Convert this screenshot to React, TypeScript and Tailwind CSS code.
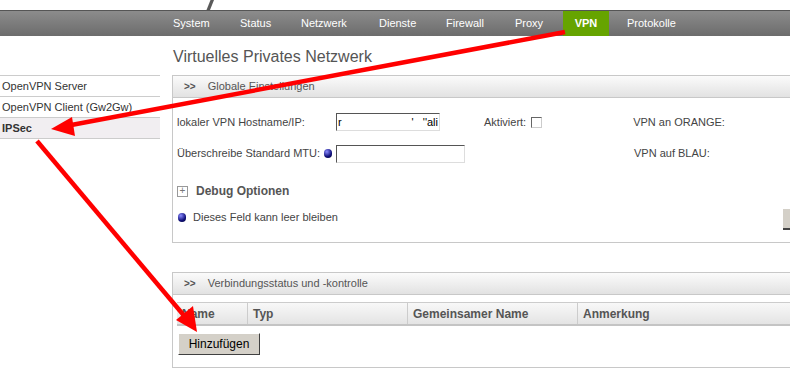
import React from "react";

const nav: { label: string; w: string }[] = [
  { label: "System", w: "w-[67px]" },
  { label: "Status", w: "w-[61px]" },
  { label: "Netzwerk", w: "w-[78px]" },
  { label: "Dienste", w: "w-[67px]" },
  { label: "Firewall", w: "w-[69px]" },
  { label: "Proxy", w: "w-[48px]" },
];

function PanelHeader({ title }: { title: string }) {
  return (
    <div className="h-[23px] flex items-center border border-[#c8c8c8] bg-gradient-to-b from-[#fbfbfb] to-[#e2e2e2] text-[11px] text-[#555]">
      <span className="pl-[11px] pr-[12px] font-bold text-[10px]">&gt;&gt;</span>
      <span>{title}</span>
    </div>
  );
}

function Ball() {
  return (
    <span className="inline-block w-[8px] h-[9px] rounded-full bg-[radial-gradient(circle_at_35%_30%,#8a8aff,#10107a_60%,#000030)]" />
  );
}

export default function App() {
  return (
    <div className="relative w-[790px] h-[370px] overflow-hidden bg-white text-[#444]" style={{ fontFamily: '"Liberation Sans", Arial, sans-serif' }}>
      {/* logo strip */}
      <div className="h-[10px] relative">
        <svg className="absolute left-[204px] top-0" width="12" height="10" viewBox="0 0 12 10">
          <path d="M10 0 L6 10 L2.5 10 L6.5 0 Z" fill="#5a5a5a" />
        </svg>
      </div>

      {/* nav */}
      <div className="h-[26px] flex border-t border-[#555] bg-gradient-to-b from-[#8c8c8c] to-[#6c6c6c] pl-[173px] text-[11px] text-white">
        {nav.map((n) => (
          <div key={n.label} className={`${n.w} flex items-center`}>{n.label}</div>
        ))}
        <div className="w-[46px] flex items-center justify-center bg-[#66a400] font-bold">VPN</div>
        <div className="pl-[18px] flex items-center">Protokolle</div>
      </div>

      <div className="flex">
        {/* sidebar */}
        <div className="w-[160px] shrink-0 pt-[39px] text-[11px] text-[#333]">
          <div className="border-t border-[#ccc]">
            <div className="h-[21px] flex items-center pl-[2px] border-b border-[#ccc]">OpenVPN Server</div>
            <div className="h-[21px] flex items-center pl-[2px] border-b border-[#ccc]">OpenVPN Client (Gw2Gw)</div>
            <div className="h-[21px] flex items-center pl-[2px] border-b border-[#ccc] bg-[#f1eef1] font-bold">IPSec</div>
          </div>
        </div>

        {/* main */}
        <div className="flex-1 pl-[12px]">
          <div className="h-[39px] pt-[11px] pl-[1px] text-[16px] text-[#555] leading-[20px]">Virtuelles Privates Netzwerk</div>

          <div className="w-[640px]">
            <PanelHeader title="Globale Einstellungen" />
            <div className="h-[145px] border-l border-b border-[#c8c8c8] pl-[4px] text-[11px] text-[#444] relative">
              <div className="flex items-center h-[33px] pt-[15px]">
                <div className="w-[159px]">lokaler VPN Hostname/IP:</div>
                <div className="w-[104px] h-[18px] border border-[#ddd] border-t-[#555] border-l-[#555] flex justify-between items-center px-[1px] text-[11px] text-black">
                  <span>r</span>
                  <span>'&nbsp;&nbsp;&nbsp;''ali</span>
                </div>
                <div className="ml-[44px] flex items-center">
                  Aktiviert:
                  <span className="ml-[5px] inline-block w-[11px] h-[11px] border border-[#ccc] border-t-[#666] border-l-[#666]" />
                </div>
                <div className="ml-[91px]">VPN an ORANGE:</div>
              </div>
              <div className="flex items-center h-[33px] pt-[12px]">
                <div className="w-[159px] flex items-center">
                  Überschreibe Standard MTU:
                  <span className="ml-[4px] flex"><Ball /></span>
                </div>
                <div className="w-[129px] h-[18px] border border-[#ddd] border-t-[#555] border-l-[#555]" />
                <div className="ml-[169px]">VPN auf BLAU:</div>
              </div>
              <div className="flex items-center mt-[21px] h-[12px]">
                <span className="w-[11px] h-[11px] border border-[#999] flex items-center justify-center text-[10px] leading-none text-[#777]">+</span>
                <span className="ml-[8px] font-bold text-[12px] text-[#555]">Debug Optionen</span>
              </div>
              <div className="flex items-center mt-[12px]">
                <span className="ml-[1px] flex"><Ball /></span>
                <span className="ml-[7px]">Dieses Feld kann leer bleiben</span>
              </div>
              <div className="absolute left-[610px] top-[111px] w-[10px] h-[21px] bg-[#d4d0c8] border-b-2 border-[#444]" />
            </div>

            <div className="mt-[29px]">
              <PanelHeader title="Verbindungsstatus und -kontrolle" />
              <div className="h-[73px] border-l border-b border-[#c8c8c8] pl-[4px] pt-[7px]">
                <div className="flex h-[24px] border-t border-b-2 border-[#ccc] border-b-[#c4c4c4] bg-gradient-to-b from-[#f8f8f8] to-[#e4e4e4] text-[12px] font-bold text-[#555]">
                  <div className="w-[71px] flex items-center pl-[5px] border-r border-[#ccc]">Name</div>
                  <div className="w-[160px] flex items-center pl-[5px] border-r border-[#ccc]">Typ</div>
                  <div className="w-[170px] flex items-center pl-[5px] border-r border-[#ccc]">Gemeinsamer Name</div>
                  <div className="flex-1 flex items-center pl-[5px]">Anmerkung</div>
                </div>
                <button className="mt-[7px] ml-[1px] w-[82px] h-[22px] bg-[#d4d0c8] border border-[#fff] border-r-[#404040] border-b-[#404040] text-[12px] text-black">
                  Hinzufügen
                </button>
              </div>
            </div>
          </div>
        </div>
      </div>

      {/* annotation arrows */}
      <svg className="absolute inset-0 pointer-events-none" width="790" height="370" viewBox="0 0 790 370">
        <line x1="565" y1="32" x2="66" y2="126" stroke="#f00" strokeWidth="4.5" />
        <polygon points="51,129 72,117 75,136" fill="#f00" />
        <line x1="37" y1="141" x2="186" y2="318" stroke="#f00" strokeWidth="4.5" />
        <polygon points="197,332 176,320 193,306" fill="#f00" />
      </svg>
    </div>
  );
}
